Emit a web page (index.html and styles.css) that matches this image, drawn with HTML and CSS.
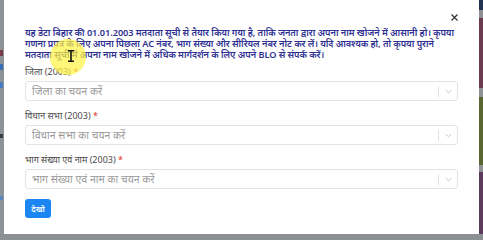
FILE: index.html
```html
<!DOCTYPE html>
<html lang="hi">
<head>
<meta charset="utf-8">
<link rel="stylesheet" href="styles.css">
</head>
<body>
<div class="page">
  <div class="backdrop-left">
    <span class="bl bl-red"></span>
    <span class="bl bl-blue"></span>
    <span class="bl bl-blue2"></span>
    <span class="bl bl-dark"></span>
    <span class="bl bl-blue3"></span>
  </div>
  <div class="modal">
    <div class="modal-header">
      <button class="close" aria-label="close">
        <svg width="7" height="7" viewBox="0 0 7 7"><path d="M0.5 0.5L6.5 6.5M6.5 0.5L0.5 6.5" stroke="#333" stroke-width="1.2"/></svg>
      </button>
    </div>
    <p class="intro">यह डेटा बिहार की 01.01.2003 मतदाता सूची से तैयार किया गया है, ताकि जनता द्वारा अपना नाम खोजने में आसानी हो। कृपया<br>गणना प्रपत्र के लिए अपना पिछला AC नंबर, भाग संख्या और सीरियल नंबर नोट कर लें। यदि आवश्यक हो, तो कृपया पुराने<br>मतदाता सूची में अपना नाम खोजने में अधिक मार्गदर्शन के लिए अपने BLO से संपर्क करें।</p>
    <div class="field">
      <label class="label">जिला (2003) <span class="req">*</span></label>
      <div class="select"><span class="ph">जिला का चयन करें</span><span class="sep"></span><span class="chev"><svg width="7" height="5" viewBox="0 0 7 5"><path d="M0.8 1.2L3.5 3.8L6.2 1.2" fill="none" stroke="#bbb" stroke-width="0.9"/></svg></span></div>
    </div>
    <div class="field">
      <label class="label">विधान सभा (2003) <span class="req">*</span></label>
      <div class="select"><span class="ph">विधान सभा का चयन करें</span><span class="sep"></span><span class="chev"><svg width="7" height="5" viewBox="0 0 7 5"><path d="M0.8 1.2L3.5 3.8L6.2 1.2" fill="none" stroke="#bbb" stroke-width="0.9"/></svg></span></div>
    </div>
    <div class="field">
      <label class="label">भाग संख्या एवं नाम (2003) <span class="req">*</span></label>
      <div class="select"><span class="ph">भाग संख्या एवं नाम का चयन करें</span><span class="sep"></span><span class="chev"><svg width="7" height="5" viewBox="0 0 7 5"><path d="M0.8 1.2L3.5 3.8L6.2 1.2" fill="none" stroke="#bbb" stroke-width="0.9"/></svg></span></div>
    </div>
    <button class="btn">देखो</button>
    <div class="cursor-halo">
      <svg class="ibeam" width="8" height="12" viewBox="0 0 8 12"><path d="M1 0.8H7M1 11.2H7M4 0.8V11.2" stroke="#111" stroke-width="1.6" fill="none"/></svg>
    </div>
  </div>
  <div class="backdrop-right">
    <span class="br br-navy"></span>
    <span class="br br-grey"></span>
    <span class="br br-maroon"></span>
    <span class="br br-grey2"></span>
    <span class="br br-olive"></span>
    <span class="br br-grey3"></span>
    <span class="br br-purple"></span>
  </div>
</div>
</body>
</html>
```

FILE: styles.css
```css
* { box-sizing: border-box; }
html, body { margin: 0; padding: 0; }
body {
  width: 483px;
  height: 234px;
  overflow: hidden;
  font-family: "Noto Sans", "Noto Sans Devanagari", sans-serif;
  background: #8b9193;
}
.page {
  display: flex;
  height: 234px;
}
.backdrop-left {
  width: 4px;
  background: #8e9496;
  display: flex;
  flex-direction: column;
  padding-top: 50px;
  gap: 8px;
}
.bl { display: block; width: 3px; height: 6px; }
.bl-red { background: #7a3a48; }
.bl-blue { background: #3e6fb5; }
.bl-blue2 { background: #4a7ac0; margin-top: 4px; }
.bl-dark { background: #3a3f46; margin-top: 38px; height: 4px; }
.bl-blue3 { background: #5a84c2; margin-top: 50px; height: 4px; }

.backdrop-right {
  width: 4px;
  display: flex;
  flex-direction: column;
}
.br { display: block; width: 4px; }
.br-navy { height: 10px; background: #1f3350; }
.br-grey { height: 8px; background: #8d8f92; }
.br-maroon { height: 70px; background: #6a3b4c; }
.br-grey2 { height: 9px; background: #8e9094; }
.br-olive { height: 68px; background: #5a6532; }
.br-grey3 { height: 7px; background: #8f9194; }
.br-purple { flex: 1; background: #5b3a5d; }

.modal {
  flex: 1;
  background: #fff;
  padding: 0 21px 0 21px;
  display: flex;
  flex-direction: column;
  align-items: flex-start;
  position: relative;
}
.modal-header {
  align-self: stretch;
  height: 27px;
  display: flex;
  justify-content: flex-end;
  align-items: flex-start;
  padding-top: 14px;
}
.close {
  border: 0;
  background: none;
  padding: 0;
  width: 7px;
  height: 7px;
  display: flex;
  cursor: pointer;
}
.intro {
  margin: 0 -8px 0 0;
  align-self: stretch;
  color: #2f3192;
  font-size: 9.2px;
  line-height: 11px;
  font-weight: 600;
  letter-spacing: -0.05px;
  white-space: nowrap;
}
.field {
  align-self: stretch;
  display: flex;
  flex-direction: column;
  margin-top: 6px;
}
.field + .field { margin-top: 9px; }
.label {
  font-size: 9px;
  line-height: 11px;
  color: #4a4a4a;
  margin-bottom: 4px;
}
.req { color: #e0302a; }
.select {
  height: 20px;
  border: 1px solid #e3e3e3;
  border-radius: 3px;
  display: flex;
  align-items: center;
  padding-left: 6px;
}
.ph {
  flex: 1;
  font-size: 10.5px;
  color: #9a9a9a;
}
.sep {
  width: 1px;
  height: 11px;
  background: #e0e0e0;
}
.chev {
  width: 18px;
  display: flex;
  justify-content: center;
  align-items: center;
}
.btn {
  margin-top: 10px;
  width: 26px;
  height: 19px;
  border: 0;
  border-radius: 3px;
  background: #1b86f2;
  color: #fff;
  font-family: inherit;
  font-size: 8px;
  font-weight: 600;
  padding: 0;
}
.cursor-halo {
  position: absolute;
  left: 46px;
  top: 39px;
  width: 36px;
  height: 36px;
  border-radius: 50%;
  background: rgba(255, 244, 70, 0.72);
  display: flex;
  justify-content: center;
  align-items: center;
}
.ibeam { margin-left: 6px; margin-top: -2px; }
```
